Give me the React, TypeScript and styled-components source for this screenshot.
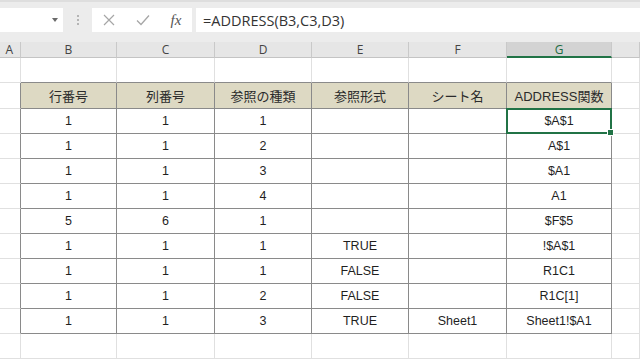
import React from 'react';
import styled, { createGlobalStyle } from 'styled-components';

const GlobalStyle = createGlobalStyle`
  body {
    margin: 0;
    font-family: 'Liberation Sans', 'Noto Sans CJK JP', sans-serif;
  }
`;

const Page = styled.div`
  width: 640px;
  height: 360px;
  overflow: hidden;
  background: #ffffff;
`;

const Toolbar = styled.div`
  display: flex;
  align-items: flex-start;
  height: 42px;
  box-sizing: border-box;
  padding-top: 8px;
  background: #ececec;
  border-top: 2px solid #dedede;
  padding-top: 6px;
`;

const NameBox = styled.div`
  width: 63px;
  height: 24px;
  background: #ffffff;
  display: flex;
  align-items: center;
  justify-content: flex-end;
  padding-right: 5px;
  box-sizing: border-box;
`;

const DropArrow = styled.span`
  width: 0;
  height: 0;
  border-left: 3.5px solid transparent;
  border-right: 3.5px solid transparent;
  border-top: 4px solid #6a6a6a;
`;

const Grip = styled.div`
  width: 29px;
  height: 24px;
  display: flex;
  flex-direction: column;
  align-items: center;
  justify-content: center;
  gap: 2px;
`;

const GripDot = styled.span`
  width: 2px;
  height: 2px;
  background: #b4b4b4;
`;

const FxButtons = styled.div`
  width: 100px;
  height: 24px;
  background: #ffffff;
  display: grid;
  grid-template-columns: 34px 34px 32px;
  align-items: center;
  justify-items: center;
  padding-left: 0;
  box-sizing: border-box;
`;

const FxLabel = styled.span`
  font-family: 'Liberation Serif', serif;
  font-style: italic;
  font-size: 15px;
  color: #555555;
`;

const FormulaInput = styled.div`
  flex: 1;
  margin-left: 4px;
  height: 24px;
  background: #ffffff;
  display: flex;
  align-items: center;
  padding-left: 7px;
  font-family: 'Open Sans', 'Liberation Sans', sans-serif;
  font-size: 14.5px;
  color: #333333;
`;

const SheetGrid = styled.div`
  display: grid;
  grid-template-columns: 21px 96px 98px 97px 97px 98px 105px 1fr;
  grid-template-rows: 16px 25px 26px repeat(10, 25px);
`;

const ColHeader = styled.div<{ $active?: boolean; $alignRight?: boolean }>`
  display: flex;
  align-items: center;
  justify-content: ${(p) => (p.$alignRight ? 'flex-end' : 'center')};
  padding-right: ${(p) => (p.$alignRight ? '7px' : '0')};
  box-sizing: border-box;
  background: ${(p) => (p.$active ? '#d3d3d3' : '#e6e6e6')};
  border-right: 1px solid #c9c9c9;
  border-bottom: ${(p) => (p.$active ? '2px solid #217346' : '1px solid #c4c4c4')};
  font-family: 'Open Sans', 'Noto Sans', sans-serif;
  font-size: 12px;
  color: ${(p) => (p.$active ? '#1e6b41' : '#444444')};
`;

const Cell = styled.div<{
  $rightDark: boolean;
  $bottomDark: boolean;
  $head: boolean;
  $selected: boolean;
}>`
  position: relative;
  display: flex;
  align-items: center;
  justify-content: center;
  box-sizing: border-box;
  border-right: 1px solid ${(p) => (p.$rightDark ? '#8a8a8a' : '#e0e0e0')};
  border-bottom: 1px solid ${(p) => (p.$bottomDark ? '#8a8a8a' : '#e0e0e0')};
  background: ${(p) => (p.$head ? '#ddd9c3' : '#ffffff')};
  font-size: ${(p) => (p.$head ? '13px' : '12.5px')};
  color: ${(p) => (p.$head ? '#2b2b2b' : '#1f1f1f')};
  white-space: nowrap;

  ${(p) =>
    p.$selected &&
    `
    &::after {
      content: '';
      position: absolute;
      left: -1px;
      top: -1px;
      right: -1px;
      bottom: -1px;
      border: 2px solid #217346;
    }
    &::before {
      content: '';
      position: absolute;
      right: -3px;
      bottom: -3px;
      width: 5px;
      height: 5px;
      background: #217346;
      border: 1px solid #ffffff;
      z-index: 1;
    }
  `}
`;

const columns = ['A', 'B', 'C', 'D', 'E', 'F', 'G', ''];

const header = ['行番号', '列番号', '参照の種類', '参照形式', 'シート名', 'ADDRESS関数'];

const data = [
  ['1', '1', '1', '', '', '$A$1'],
  ['1', '1', '2', '', '', 'A$1'],
  ['1', '1', '3', '', '', '$A1'],
  ['1', '1', '4', '', '', 'A1'],
  ['5', '6', '1', '', '', '$F$5'],
  ['1', '1', '1', 'TRUE', '', '!$A$1'],
  ['1', '1', '1', 'FALSE', '', 'R1C1'],
  ['1', '1', '2', 'FALSE', '', 'R1C[1]'],
  ['1', '1', '3', 'TRUE', 'Sheet1', 'Sheet1!$A1'],
];

const rowCount = 12;

const inTable = (r: number, c: number) => r >= 1 && r <= 10 && c >= 1 && c <= 6;

const cellText = (r: number, c: number) => {
  if (c < 1 || c > 6) return '';
  if (r === 1) return header[c - 1];
  if (r >= 2 && r <= 10) return data[r - 2][c - 1];
  return '';
};

const CrossIcon = () => (
  <svg width="12" height="12" viewBox="0 0 12 12">
    <path d="M1 1 L11 11 M11 1 L1 11" stroke="#a6a6a6" strokeWidth="1.2" fill="none" />
  </svg>
);

const CheckIcon = () => (
  <svg width="14" height="12" viewBox="0 0 14 12">
    <path d="M1 6.5 L5 10.5 L13 1.5" stroke="#a6a6a6" strokeWidth="1.3" fill="none" />
  </svg>
);

export default function App() {
  const rows = [];
  for (let r = 0; r < rowCount; r++) {
    for (let c = 0; c < columns.length; c++) {
      rows.push(
        <Cell
          key={`${r}-${c}`}
          $rightDark={inTable(r, c) || inTable(r, c + 1)}
          $bottomDark={inTable(r, c) || inTable(r + 1, c)}
          $head={r === 1 && inTable(r, c)}
          $selected={r === 2 && c === 6}
        >
          {cellText(r, c)}
        </Cell>
      );
    }
  }

  return (
    <Page>
      <GlobalStyle />
      <Toolbar>
        <NameBox>
          <DropArrow />
        </NameBox>
        <Grip>
          <GripDot />
          <GripDot />
          <GripDot />
        </Grip>
        <FxButtons>
          <CrossIcon />
          <CheckIcon />
          <FxLabel>fx</FxLabel>
        </FxButtons>
        <FormulaInput>=ADDRESS(B3,C3,D3)</FormulaInput>
      </Toolbar>
      <SheetGrid>
        {columns.map((col, i) => (
          <ColHeader key={col || 'H'} $active={col === 'G'} $alignRight={i === 0}>
            {col}
          </ColHeader>
        ))}
        {rows}
      </SheetGrid>
    </Page>
  );
}
